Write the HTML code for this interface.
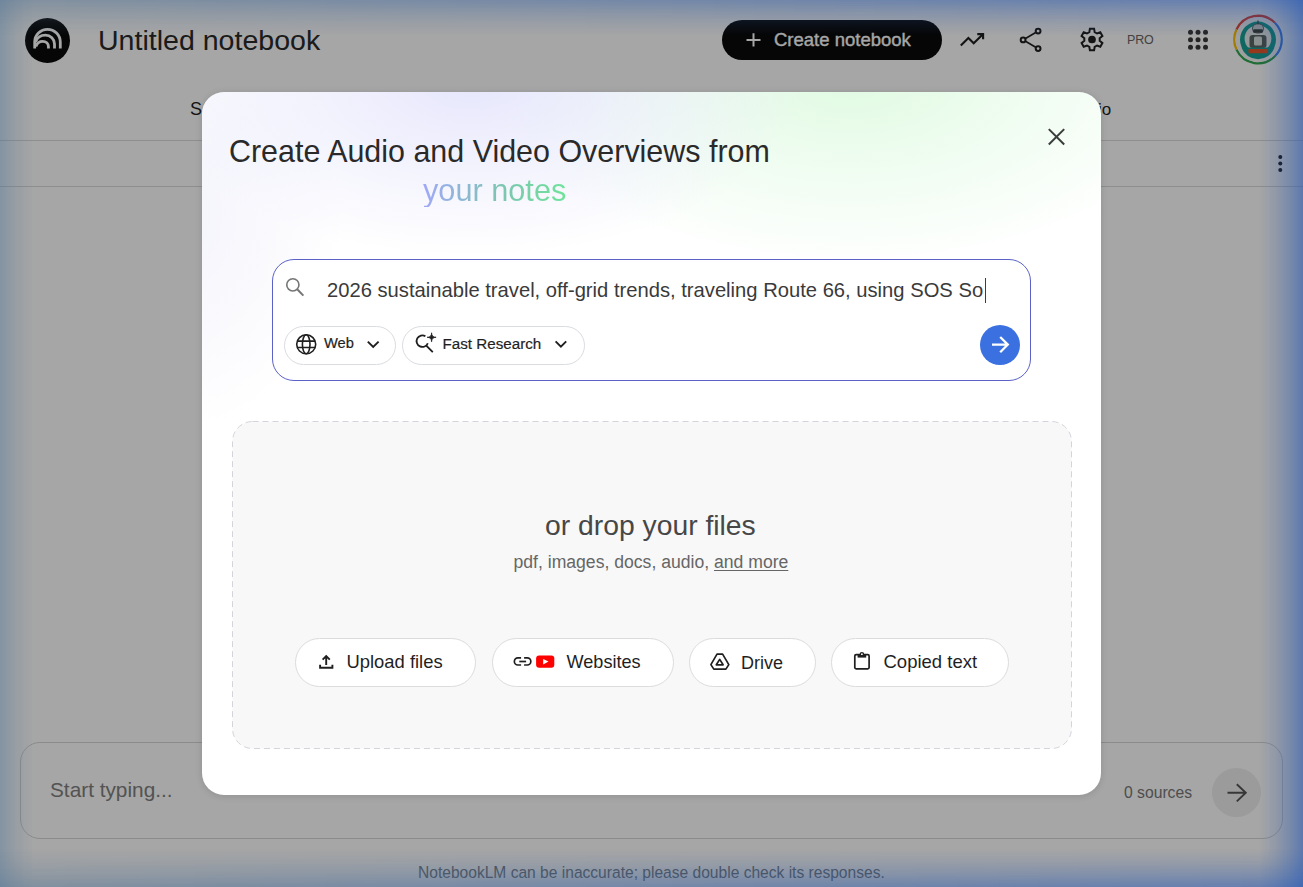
<!DOCTYPE html>
<html><head><meta charset="utf-8">
<style>
*{box-sizing:border-box;margin:0;padding:0}
html,body{width:1303px;height:887px;overflow:hidden;background:#fff;font-family:"Liberation Sans",sans-serif}
.a{position:absolute;white-space:pre;line-height:1}
.g{position:absolute}
#page{position:absolute;left:0;top:0;width:1303px;height:887px;background:#fff}
#scrim{position:absolute;left:0;top:0;width:1303px;height:887px;background:rgba(0,0,0,0.35)}
#glow{position:absolute;left:0;top:0;width:1303px;height:887px;pointer-events:none}
#modal{position:absolute;left:202px;top:92px;width:899px;height:703px;border-radius:22px;background:#fff;overflow:hidden;box-shadow:0 1px 6px 1px rgba(0,0,0,0.1)}
#modal .grad{position:absolute;left:0;top:0;width:899px;height:360px;
 background:
  radial-gradient(ellipse 330px 175px at 270px -10px, rgba(226,226,252,0.85), rgba(226,226,252,0.45) 45%, rgba(226,226,252,0) 100%),
  radial-gradient(ellipse 360px 190px at 650px -15px, rgba(222,250,224,0.95), rgba(222,250,224,0.5) 45%, rgba(222,250,224,0) 100%),
  radial-gradient(ellipse 160px 220px at -20px 120px, rgba(236,236,250,0.6), rgba(236,236,250,0) 100%);}
.chip{position:absolute;border:1px solid #dadce0;border-radius:20px;background:#fff}
.btn{position:absolute;top:546px;height:49px;border:1px solid #dcdcdc;border-radius:25px;background:#fff}
svg.full{position:absolute;left:0;top:0}
</style></head><body>
<div id="page">
  <!-- text -->
  <div class="a" style="left:98px;top:25.5px;font-size:28.55px;color:#2a2a2a">Untitled notebook</div>
  <div class="g" style="left:722px;top:20px;width:220px;height:40px;border-radius:20px;background:#0a0a0a"></div>
  <div class="a" style="left:774px;top:30.5px;font-size:18.5px;color:#fff;-webkit-text-stroke:0.35px #fff">Create notebook</div>
  <div class="a" style="left:1127px;top:33.5px;font-size:12.5px;color:#666;letter-spacing:-0.2px">PRO</div>
  <div class="a" style="left:190px;top:99.8px;font-size:18px;color:#1f1f1f">S</div>
  <div class="a" style="left:1063px;top:100.6px;font-size:17px;color:#1f1f1f">Studio</div>
  <div class="g" style="left:0;top:140px;width:1303px;height:1px;background:#dadada"></div>
  <div class="g" style="left:0;top:186px;width:1303px;height:1px;background:#dadada"></div>

  <div class="g" style="left:20px;top:742px;width:1263px;height:97px;border:1px solid #d6d6d6;border-radius:20px;background:#fff"></div>
  <div class="a" style="left:50px;top:779.5px;font-size:20.8px;color:#808080">Start typing...</div>
  <div class="a" style="left:1124px;top:784.5px;font-size:15.7px;color:#787878">0 sources</div>
  <div class="g" style="left:1212px;top:768px;width:49px;height:49px;border-radius:50%;background:#efefef"></div>
  <div class="a" style="left:418px;top:864.9px;font-size:15.58px;color:#7a7f86">NotebookLM can be inaccurate; please double check its responses.</div>

  <svg class="full" width="1303" height="887" viewBox="0 0 1303 887">
    <!-- logo -->
    <g transform="translate(25 18)">
      <circle cx="22.5" cy="22.5" r="22.5" fill="#0a0a0a"/>
      <g fill="none" stroke="#fff" stroke-width="2.8">
        <path d="M9.7 30.6 V24.1 A12.8 12.8 0 0 1 35.3 24.1 V30.6"/>
        <path d="M10.6 24 C12.2 19.2 15.8 17.2 20.5 17.2 C25.5 17.2 29.5 21 29.5 26 V30.6"/>
        <path d="M10.9 28.4 C12.3 24.6 14.8 23.35 17.6 23.35 C21 23.35 23.45 25.5 23.45 28.8 V30.6"/>
      </g>
    </g>
    <!-- plus -->
    <path d="M753.5 33.2 V46.6 M746.5 39.9 H760.5" stroke="#fff" stroke-width="2"/>
    <!-- trending -->
    <g fill="none" stroke="#1f1f1f" stroke-width="2.1">
      <path d="M960.8 45.6 L968.4 38 L973.7 43.3 L982.6 34.4"/>
      <path d="M977.3 34.1 H983.1 V39.3"/>
    </g>
    <!-- share -->
    <g fill="none" stroke="#1f1f1f">
      <circle cx="1038.1" cy="31.1" r="2.4" stroke-width="2"/>
      <circle cx="1023.1" cy="39.9" r="2.4" stroke-width="2"/>
      <circle cx="1038.1" cy="48.6" r="2.4" stroke-width="2"/>
      <path d="M1025.5 38.5 L1035.7 32.5 M1025.5 41.3 L1035.7 47.2" stroke-width="1.6"/>
    </g>
    <!-- gear -->
    <path d="M1089.33 32.17 L1089.90 28.70 L1094.10 28.70 L1094.67 32.17 L1097.01 33.52 L1100.30 32.28 L1102.40 35.92 L1099.68 38.15 L1099.68 40.85 L1102.40 43.08 L1100.30 46.72 L1097.01 45.48 L1094.67 46.83 L1094.10 50.30 L1089.90 50.30 L1089.33 46.83 L1086.99 45.48 L1083.70 46.72 L1081.60 43.08 L1084.32 40.85 L1084.32 38.15 L1081.60 35.92 L1083.70 32.28 L1086.99 33.52Z" fill="none" stroke="#1f1f1f" stroke-width="2"/>
    <circle cx="1092" cy="39.5" r="3.85" fill="#1f1f1f"/>
    <!-- apps grid -->
    <g fill="#3a3a3a">
      <circle cx="1190.5" cy="32.3" r="2.5"/><circle cx="1198" cy="32.3" r="2.5"/><circle cx="1205.5" cy="32.3" r="2.5"/>
      <circle cx="1190.5" cy="39.8" r="2.5"/><circle cx="1198" cy="39.8" r="2.5"/><circle cx="1205.5" cy="39.8" r="2.5"/>
      <circle cx="1190.5" cy="47.3" r="2.5"/><circle cx="1198" cy="47.3" r="2.5"/><circle cx="1205.5" cy="47.3" r="2.5"/>
    </g>
    <!-- avatar -->
    <g transform="translate(1233 14.6)">
      <g fill="none" stroke-width="2.3">
        <path d="M3.5 15.0 A23.7 23.7 0 0 1 41.8 8.2" stroke="#ea4335"/>
        <path d="M41.8 8.2 A23.7 23.7 0 0 1 42.3 41.2" stroke="#4285f4"/>
        <path d="M42.3 41.2 A23.7 23.7 0 0 1 3.5 35.0" stroke="#34a853"/>
        <path d="M3.5 35.0 A23.7 23.7 0 0 1 3.5 15.0" stroke="#fbbc04"/>
      </g>
      <circle cx="25" cy="25" r="22.4" fill="#f4f4f4"/>
      <circle cx="25" cy="25" r="18" fill="#16a095"/>
      <circle cx="25" cy="24" r="13.4" fill="#e6ecec"/>
      <path d="M25 5.8 V9.6" stroke="#3a4444" stroke-width="1.2"/>
      <rect x="19.5" y="9.4" width="11" height="9" rx="4" fill="#c8d0d0" stroke="#4a5555" stroke-width="0.8"/>
      <rect x="20.2" y="14.6" width="9.6" height="3.6" rx="1" fill="#3c4848"/>
      <rect x="16.5" y="20.5" width="17" height="13" rx="3" fill="#5a6666"/>
      <rect x="21" y="22" width="8" height="9" rx="1.5" fill="#d4dcdc"/>
      <path d="M8.5 33 H41.5 A17.5 17.5 0 0 1 8.5 33Z" fill="#16a095"/>
      <rect x="15.5" y="34.4" width="19" height="4.2" rx="0.8" fill="#e8552a"/>
    </g>
    <!-- kebab -->
    <g fill="#1f1f1f"><circle cx="1280.3" cy="157" r="2"/><circle cx="1280.3" cy="163.5" r="2"/><circle cx="1280.3" cy="170" r="2"/></g>
    <!-- bottom arrow -->
    <path d="M1227.5 792.8 H1245.5 M1236.8 784.3 L1245.8 792.8 L1236.8 801.4" fill="none" stroke="#555" stroke-width="1.9"/>
  </svg>
</div>
<div id="scrim"></div>

<div id="modal">
  <div class="grad"></div>
  <div class="a" style="left:27px;top:44.2px;font-size:30.45px;color:#2a2a2a">Create Audio and Video Overviews from</div>
  <div class="a" style="left:221px;top:83.9px;font-size:30.7px;background:linear-gradient(90deg,#a0a8f8,#7cc6b0 55%,#6fe39a);-webkit-background-clip:text;background-clip:text;color:transparent">your notes</div>

  <div class="g" style="left:70px;top:167px;width:759px;height:122px;border:1px solid #5a62c8;border-radius:22px;background:#fff"></div>
  <div class="a" style="left:125px;top:187.8px;font-size:20.2px;color:#3a3a3a">2026 sustainable travel, off-grid trends, traveling Route 66, using SOS So</div>
  <div class="g" style="left:783px;top:186px;width:1.3px;height:25px;background:#1a3d8f"></div>

  <div class="chip" style="left:81.5px;top:233.5px;width:112px;height:39px"></div>
  <div class="a" style="left:122px;top:244.3px;font-size:14.7px;color:#1f1f1f;-webkit-text-stroke:0.2px #1f1f1f">Web</div>
  <div class="chip" style="left:199.5px;top:233.5px;width:183px;height:39px"></div>
  <div class="a" style="left:240.5px;top:243.9px;font-size:15.2px;color:#1f1f1f;-webkit-text-stroke:0.2px #1f1f1f">Fast Research</div>

  <div class="g" style="left:778px;top:232.8px;width:40px;height:40px;border-radius:50%;background:#3a70e0"></div>

  <svg class="g" style="left:30px;top:329px" width="840" height="328" viewBox="0 0 840 328"><rect x="0.5" y="0.5" width="839" height="327" rx="20" ry="20" fill="#f8f8f8" stroke="#d4d4dc" stroke-width="1" stroke-dasharray="6 4"/></svg>
  <div class="a" style="left:343px;top:418.9px;font-size:28.3px;color:#474747">or drop your files</div>
  <div class="a" style="left:311.5px;top:461.6px;font-size:17.6px;color:#666">pdf, images, docs, audio, <span style="text-decoration:underline;text-underline-offset:1.5px">and more</span></div>

  <div class="btn" style="left:92.5px;width:181px"></div>
  <div class="a" style="left:144.5px;top:560.5px;font-size:18.4px;color:#1f1f1f">Upload files</div>
  <div class="btn" style="left:289.5px;width:182px"></div>
  <div class="a" style="left:364.5px;top:560.5px;font-size:18.1px;color:#1f1f1f">Websites</div>
  <div class="btn" style="left:486.5px;width:127px"></div>
  <div class="a" style="left:539px;top:561.5px;font-size:18px;color:#1f1f1f">Drive</div>
  <div class="btn" style="left:628.5px;width:178px"></div>
  <div class="a" style="left:681.5px;top:560.5px;font-size:18.5px;color:#1f1f1f">Copied text</div>

  <svg class="full" width="899" height="703" viewBox="202 92 899 703">
    <!-- close -->
    <path d="M1048.8 129.1 L1064.2 144.5 M1064.2 129.1 L1048.8 144.5" stroke="#3c3c3c" stroke-width="2"/>
    <!-- search -->
    <circle cx="292.85" cy="284.85" r="6.1" fill="none" stroke="#757575" stroke-width="1.6"/>
    <path d="M297.2 289.2 L303.4 295.6" stroke="#757575" stroke-width="2"/>
    <!-- globe -->
    <g fill="none" stroke="#1f1f1f" stroke-width="1.6">
      <circle cx="306.2" cy="344.3" r="9.5"/>
      <ellipse cx="306.2" cy="344.3" rx="3.8" ry="9.5"/>
      <path d="M297.2 341.1 H315.2 M297.2 347.5 H315.2"/>
    </g>
    <!-- chevrons -->
    <path d="M367.8 341.6 L373.2 347 L378.6 341.6" fill="none" stroke="#1f1f1f" stroke-width="1.9"/>
    <path d="M555.6 341.4 L560.9 346.7 L566.2 341.4" fill="none" stroke="#1f1f1f" stroke-width="1.9"/>
    <!-- fast research icon -->
    <path d="M425.4 336.2 A5.8 5.8 0 1 0 427.8 343.2" fill="none" stroke="#1f1f1f" stroke-width="1.8"/>
    <path d="M426.3 345.6 L432.8 352.2" stroke="#1f1f1f" stroke-width="1.8"/>
    <path d="M431.6 332.8 Q431.6 337.3 436.1 337.3 Q431.6 337.3 431.6 341.8 Q431.6 337.3 427.1 337.3 Q431.6 337.3 431.6 332.8Z" fill="#1f1f1f" stroke="#1f1f1f" stroke-width="0.8" stroke-linejoin="round"/>
    <!-- send arrow -->
    <path d="M992 344.6 H1007.8 M1000.2 337 L1007.8 344.6 L1000.2 352.2" fill="none" stroke="#fff" stroke-width="2.3"/>
    <!-- upload -->
    <g fill="none" stroke="#1f1f1f" stroke-width="1.9">
      <path d="M320.1 664.8 V667.7 H332.4 V664.8"/>
      <path d="M326.2 665 V656.3 M322.6 659.6 L326.2 656 L329.8 659.6"/>
    </g>
    <!-- link -->
    <g fill="none" stroke="#1f1f1f" stroke-width="1.7">
      <path d="M521.1 657.9 H517.9 A3.55 3.55 0 0 0 517.9 665 H521.1"/>
      <path d="M524.1 657.9 H527.3 A3.55 3.55 0 0 1 527.3 665 H524.1"/>
      <path d="M519.3 661.5 H526.1"/>
    </g>
    <!-- youtube -->
    <rect x="536.1" y="655.4" width="18.2" height="12.4" rx="3" fill="#ff0000"/>
    <path d="M543.2 659 L548.5 661.6 L543.2 664.4Z" fill="#fff"/>
    <!-- drive -->
    <g fill="none" stroke="#1f1f1f" stroke-width="1.7" stroke-linejoin="round">
      <path d="M717 654.1 H722.6 L728.8 664.6 L725.9 669.1 H713.8 L710.9 664.6Z"/>
      <path d="M719.7 659.4 L723.1 664.8 H716.3Z"/>
    </g>
    <!-- clipboard -->
    <rect x="854.8" y="654.7" width="14.3" height="14.2" rx="1.3" fill="none" stroke="#1f1f1f" stroke-width="1.7"/>
    <rect x="857.6" y="654" width="8.6" height="3.6" fill="#1f1f1f"/>
    <circle cx="861.9" cy="654.3" r="2.3" fill="#1f1f1f"/>
    <circle cx="861.9" cy="654.2" r="0.9" fill="#fff"/>
  </svg>
</div>

<div id="glow">
  <div class="g" style="left:0;top:0;width:34px;height:887px;background:rgba(80,120,155,0.40);-webkit-mask-image:linear-gradient(90deg,#000,rgba(0,0,0,.62) 30%,rgba(0,0,0,.25) 65%,rgba(0,0,0,0))"></div>
  <div class="g" style="right:0;top:0;width:44px;height:887px;background:rgba(40,90,180,0.58);-webkit-mask-image:linear-gradient(270deg,#000,rgba(0,0,0,.62) 30%,rgba(0,0,0,.25) 65%,rgba(0,0,0,0))"></div>
  <div class="g" style="left:0;top:0;width:1303px;height:36px;background:linear-gradient(90deg,rgba(85,118,150,0.44),rgba(55,100,170,0.46) 50%,rgba(40,90,185,0.52));-webkit-mask-image:linear-gradient(180deg,#000,rgba(0,0,0,.62) 30%,rgba(0,0,0,.25) 65%,rgba(0,0,0,0))"></div>
  <div class="g" style="left:0;bottom:0;width:1303px;height:38px;background:linear-gradient(90deg,rgba(85,118,150,0.44),rgba(55,100,170,0.46) 50%,rgba(40,90,185,0.52));-webkit-mask-image:linear-gradient(0deg,#000,rgba(0,0,0,.62) 30%,rgba(0,0,0,.25) 65%,rgba(0,0,0,0))"></div>
</div>
</body></html>
